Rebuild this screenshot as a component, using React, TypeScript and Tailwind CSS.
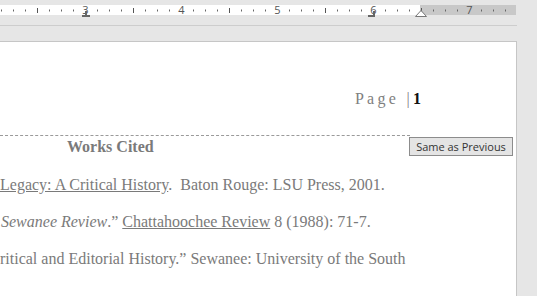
const serif = { fontFamily: '"Liberation Serif", "Times New Roman", serif' };

function Ruler() {
  const ticks: JSX.Element[] = [];
  for (let i = 0; i < 62; i++) {
    const x = -203 + i * 12 + 0.5;
    if (x < 0 || x > 515) continue;
    const k = i % 8;
    if (k === 0) {
      const n = Math.round(i / 8);
      ticks.push(
        <text key={i} x={x} y={14} textAnchor="middle" fontSize="11" fill="#555" fontFamily='"Open Sans", sans-serif'>
          {n}
        </text>
      );
    } else if (k === 4) {
      ticks.push(<line key={i} x1={x} x2={x} y1={8} y2={13} stroke="#555" />);
    } else {
      ticks.push(<line key={i} x1={x} x2={x} y1={9.5} y2={11.5} stroke="#666" />);
    }
  }
  return (
    <svg width="537" height="25" className="block">
      <rect x="0" y="5" width="420" height="10" fill="#ffffff" />
      <rect x="420" y="5" width="96" height="10" fill="#c8c8c8" />
      {ticks}
      {/* center tab under 3 */}
      <rect x="82" y="15" width="8" height="2" fill="#666" />
      <rect x="85" y="11" width="2" height="5" fill="#666" />
      {/* right tab under 6 */}
      <rect x="368" y="15" width="7" height="2" fill="#666" />
      <rect x="373" y="11" width="2" height="5" fill="#666" />
      {/* right indent */}
      <path d="M415.5 16.5 L421 10.5 L426.5 16.5 Z" fill="#fff" stroke="#777" />
    </svg>
  );
}

export default function App() {
  return (
    <div className="w-[537px] h-[296px] bg-[#e6e6e6] overflow-hidden flex flex-col">
      {/* ── Ruler ─────────────────────────────── */}
      <Ruler />
      <div className="w-[517px] h-px bg-[#cdcdcd]" />
      <div className="h-[15px]" />

      {/* ── Page ──────────────────────────────── */}
      <div className="relative w-[517px] flex-1 bg-white border-t border-r border-[#c6c6c6]" style={serif}>
        {/* header */}
        <div className="flex justify-end pr-[95px] mt-[47px] h-[20px] leading-[20px] text-[16px]">
          <span className="text-[#808080] tracking-[3.3px]">Page |</span>
          <span className="text-[#111] font-bold">1</span>
        </div>
        <div className="mt-[26px] w-[410px] border-t border-dashed border-[#9a9a9a]" />

        <button
          className="absolute left-[409px] top-[95px] w-[104px] h-[19px] bg-[#e4e4e4] border border-[#8c8c8c] text-[11px] leading-[17px] text-[#333]"
          style={{ fontFamily: '"Open Sans", "Noto Sans", sans-serif' }}
        >
          Same as Previous
        </button>

        {/* body */}
        <div className="text-[#7a7a7a] whitespace-nowrap">
          <div className="pl-[67px] h-[22px] leading-[22px] text-[16px] font-bold">Works Cited</div>
          <div className="mt-[8px] text-[16px] leading-[37px]">
            <p>
              <span className="underline">Legacy: A Critical History</span>.&nbsp; Baton Rouge: LSU Press, 2001.
            </p>
            <p className="pl-[1px]">
              <i>Sewanee Review</i>.” <span className="underline">Chattahoochee Review</span> 8 (1988): 71-7.
            </p>
            <p>ritical and Editorial History.” Sewanee: University of the South</p>
          </div>
        </div>
      </div>
    </div>
  );
}
